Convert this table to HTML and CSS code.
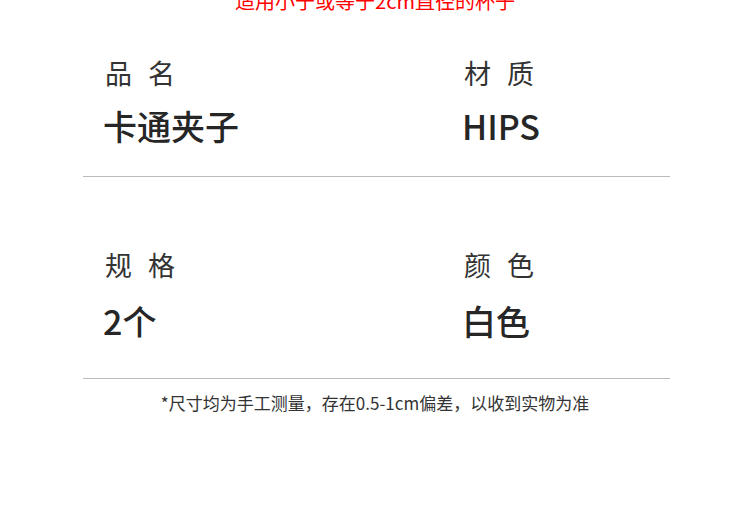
FILE: index.html
```html
<!DOCTYPE html>
<html lang="zh-CN">

<head>
    <meta charset="UTF-8">
    <meta name="viewport" content="width=device-width, initial-scale=1.0">
    <title>产品参数</title>
    <link rel="stylesheet" href="styles.css">
</head>

<body>
    <div class="tagline">适用小于或等于2cm直径的杯子</div>

    <div class="specs">
        <div class="spec-row first">
            <div class="spec">
                <div class="spec-label">品名</div>
                <div class="spec-value">卡通夹子</div>
            </div>
            <div class="spec">
                <div class="spec-label">材质</div>
                <div class="spec-value">HIPS</div>
            </div>
        </div>

        <div class="spec-row second">
            <div class="spec">
                <div class="spec-label">规格</div>
                <div class="spec-value">2个</div>
            </div>
            <div class="spec">
                <div class="spec-label">颜色</div>
                <div class="spec-value">白色</div>
            </div>
        </div>
    </div>

    <p class="note">*尺寸均为手工测量，存在0.5-1cm偏差，以收到实物为准</p>
</body>

</html>
```

FILE: styles.css
```css
body {
    margin: 0;
    background: #fff;
    font-family: "Noto Sans CJK SC", "Noto Sans", sans-serif;
    color: #333;
}

.tagline {
    margin-top: -9px;
    font-size: 20px;
    line-height: 20px;
    color: #f00;
    text-align: center;
}

.specs {
    width: 587px;
    margin-left: 83px;
}

.spec-row {
    display: grid;
    grid-template-columns: 381px 1fr;
    border-bottom: 1px solid #bbb;
}

.spec-row.first {
    padding: 44px 0 28px;
}

.spec-row.second {
    padding: 70px 0 35px;
}

.spec:first-child {
    padding-left: 22px;
}

.spec-label {
    font-size: 27px;
    line-height: 36px;
    letter-spacing: 16px;
    color: #333;
}

.spec-value {
    margin-top: 13px;
    margin-left: -2px;
    font-size: 34px;
    line-height: 44px;
    font-weight: 500;
    color: #262626;
}

.second .spec-value {
    margin-top: 16px;
}

.note {
    margin: 12px 0 0;
    font-size: 17px;
    line-height: 24px;
    text-align: center;
    color: #333;
}
```
